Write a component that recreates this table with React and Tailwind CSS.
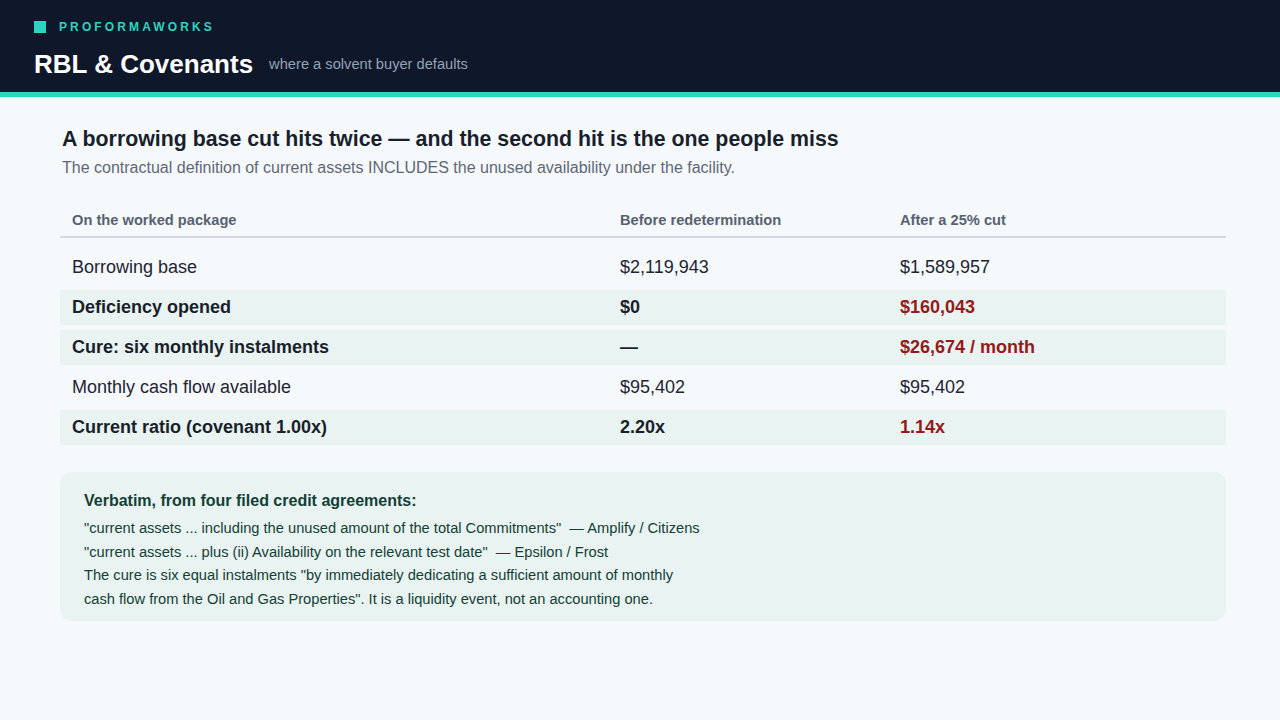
const rows = [
  { label: "Borrowing base", before: "$2,119,943", after: "$1,589,957" },
  { label: "Deficiency opened", before: "$0", after: "$160,043", strong: true },
  { label: "Cure: six monthly instalments", before: "—", after: "$26,674 / month", strong: true },
  { label: "Monthly cash flow available", before: "$95,402", after: "$95,402" },
  { label: "Current ratio (covenant 1.00x)", before: "2.20x", after: "1.14x", strong: true },
];

const Row = ({ label, before, after, strong }) => (
  <div
    className={`grid grid-cols-[548px_280px_1fr] h-[35px] items-center text-[18px] ${
      strong ? "bg-[#e9f3f1] font-bold text-[#1a1f2c]" : "text-[#1f2433]"
    }`}
  >
    <div className="pl-3">{label}</div>
    <div className="pl-3">{before}</div>
    <div className={`pl-3 ${strong ? "text-[#951b1b]" : ""}`}>{after}</div>
  </div>
);

export default function App() {
  return (
    <div
      className="min-h-[720px] bg-[#f5f9fc]"
      style={{ fontFamily: '"Liberation Sans", Arial, sans-serif' }}
    >
      <header className="h-[97px] bg-[#0f172a] border-b-[5px] border-[#2dd4bf] px-[34px] pt-[20px]">
        <div className="flex items-center gap-[13px] h-[14px]">
          <span className="w-3 h-3 bg-[#2dd4bf]" />
          <span className="text-[12px] font-bold tracking-[0.26em] text-[#2dd4bf] leading-none">
            PROFORMAWORKS
          </span>
        </div>
        <div className="flex items-center gap-4 mt-[14px]">
          <h1 className="text-[26px] font-bold text-white leading-[32px]">RBL &amp; Covenants</h1>
          <span className="text-[14.67px] text-[#94a3b8]">where a solvent buyer defaults</span>
        </div>
      </header>

      <main className="ml-[60px] w-[1166px] pt-[27px]">
        <h2 className="pl-[2px] text-[21.33px] font-bold leading-[30px] text-[#1a1f2c]">
          A borrowing base cut hits twice — and the second hit is the one people miss
        </h2>
        <p className="pl-[2px] mt-[2px] text-[16px] leading-[24px] text-[#5f6776]">
          The contractual definition of current assets INCLUDES the unused availability under the facility.
        </p>

        <div className="mt-[24px] grid grid-cols-[548px_280px_1fr] border-b-2 border-[#d3d8e2] py-[6px] text-[14.67px] font-bold leading-[20px] text-[#586171]">
          <div className="pl-3">On the worked package</div>
          <div className="pl-3">Before redetermination</div>
          <div className="pl-3">After a 25% cut</div>
        </div>

        <div className="mt-[12px] flex flex-col gap-[5px]">
          {rows.map((r) => (
            <Row key={r.label} {...r} />
          ))}
        </div>

        <section className="mt-[27px] rounded-xl bg-[#e9f3f1] px-6 pt-[17px] pb-[10px] text-[#123f36]">
          <h3 className="text-[16px] font-bold leading-[24px]">
            Verbatim, from four filed credit agreements:
          </h3>
          <div className="mt-[4px] text-[14.67px] leading-[23.5px]">
            <p>"current assets ... including the unused amount of the total Commitments"&nbsp; — Amplify / Citizens</p>
            <p>"current assets ... plus (ii) Availability on the relevant test date"&nbsp; — Epsilon / Frost</p>
            <p>
              The cure is six equal instalments "by immediately dedicating a sufficient amount of monthly
              <br />
              cash flow from the Oil and Gas Properties". It is a liquidity event, not an accounting one.
            </p>
          </div>
        </section>
      </main>
    </div>
  );
}
